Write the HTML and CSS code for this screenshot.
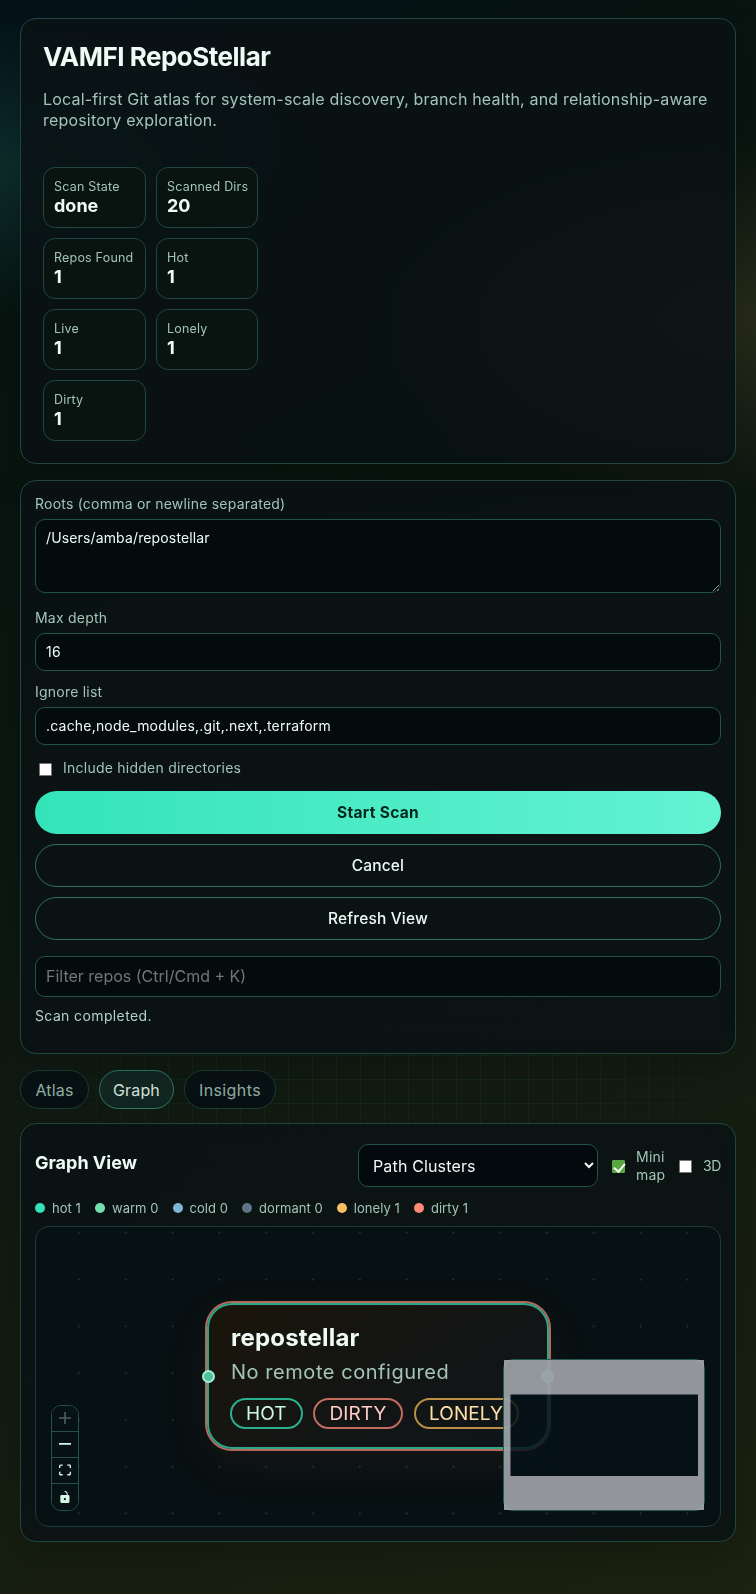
FILE: index.html
```html
<!DOCTYPE html>
<html lang="en">
<head>
  <meta charset="UTF-8">
  <meta name="viewport" content="width=device-width, initial-scale=1.0">
  <title>VAMFI RepoStellar</title>
  <link rel="stylesheet" href="styles.css">
</head>
<body>

  <main class="app">
    <header class="panel hero">
      <h1>VAMFI RepoStellar</h1>
      <p class="tagline">Local-first Git atlas for system-scale discovery, branch health, and relationship-aware<br>repository exploration.</p>
      <div class="stats">
        <div class="stat"><span>Scan State</span><strong>done</strong></div>
        <div class="stat"><span>Scanned Dirs</span><strong>20</strong></div>
        <div class="stat"><span>Repos Found</span><strong>1</strong></div>
        <div class="stat"><span>Hot</span><strong>1</strong></div>
        <div class="stat"><span>Live</span><strong>1</strong></div>
        <div class="stat"><span>Lonely</span><strong>1</strong></div>
        <div class="stat"><span>Dirty</span><strong>1</strong></div>
      </div>
    </header>

    <section class="panel controls">
      <label class="field roots">Roots (comma or newline separated)
        <textarea>/Users/amba/repostellar</textarea>
      </label>
      <label class="field">Max depth
        <input type="text" value="16">
      </label>
      <label class="field">Ignore list
        <input type="text" value=".cache,node_modules,.git,.next,.terraform">
      </label>
      <label class="check"><input type="checkbox"> Include hidden directories</label>
      <div class="actions">
        <button class="btn primary">Start Scan</button>
        <button class="btn">Cancel</button>
        <button class="btn">Refresh View</button>
      </div>
      <input class="search" type="text" placeholder="Filter repos (Ctrl/Cmd + K)">
      <p class="status">Scan completed.</p>
    </section>

    <nav class="tabs">
      <button class="tab">Atlas</button>
      <button class="tab active">Graph</button>
      <button class="tab insights">Insights</button>
    </nav>

    <section class="panel graph">
      <div class="graph-head">
        <h2>Graph View</h2>
        <div class="graph-tools">
          <select><option>Path Clusters</option></select>
          <label class="check mini"><input type="checkbox" checked> <span>Mini map</span></label>
          <label class="check"><input type="checkbox"> <span class="three-d">3D</span></label>
        </div>
      </div>

      <div class="legend">
        <span><i class="dot hot"></i>hot 1</span>
        <span><i class="dot warm"></i>warm 0</span>
        <span><i class="dot cold"></i>cold 0</span>
        <span><i class="dot dormant"></i>dormant 0</span>
        <span><i class="dot lonely"></i>lonely 1</span>
        <span><i class="dot dirty"></i>dirty 1</span>
      </div>

      <div class="canvas">
        <div class="node">
          <span class="handle left"></span>
          <span class="handle right"></span>
          <div class="node-title">repostellar</div>
          <div class="node-sub">No remote configured</div>
          <div class="pills">
            <span class="pill p-hot">HOT</span>
            <span class="pill p-dirty">DIRTY</span>
            <span class="pill p-lonely">LONELY</span>
          </div>
        </div>

        <div class="zoom-controls">
          <button disabled><svg viewBox="0 0 32 32"><path d="M32 18.133H18.133V32h-4.266V18.133H0v-4.266h13.867V0h4.266v13.867H32z"/></svg></button>
          <button><svg viewBox="0 0 32 5" class="minus"><path d="M0 0h32v4.2H0z"/></svg></button>
          <button><svg viewBox="0 0 32 30"><path d="M3.692 4.63c0-.53.4-.938.939-.938h5.215V0H4.708C2.13 0 0 2.054 0 4.63v5.216h3.692V4.631zM27.354 0h-5.2v3.692h5.17c.53 0 .984.4.984.939v5.215H32V4.631A4.624 4.624 0 0027.354 0zm.954 24.83c0 .532-.4.94-.939.94h-5.215v3.768h5.215c2.577 0 4.631-2.13 4.631-4.707v-5.139h-3.692v5.139zm-23.677.94a.919.919 0 01-.939-.94v-5.138H0v5.139c0 2.577 2.13 4.707 4.708 4.707h5.138V25.77H4.631z"/></svg></button>
          <button><svg viewBox="0 0 25 32"><path d="M21.333 10.667H19.81V7.619C19.81 3.429 16.38 0 12.19 0c-4.114 1.828-1.37 2.133.305 2.438 1.676.305 4.42 2.59 4.42 5.181v3.048H3.047A3.056 3.056 0 000 13.714v15.238A3.056 3.056 0 003.048 32h18.285a3.056 3.056 0 003.048-3.048V13.714a3.056 3.056 0 00-3.048-3.047zM12.19 24.533a3.056 3.056 0 01-3.047-3.047 3.056 3.056 0 013.047-3.048 3.056 3.056 0 013.048 3.048 3.056 3.056 0 01-3.048 3.047z"/></svg></button>
        </div>

        <div class="minimap">
          <svg width="200" height="150" viewBox="0 0 200 150"><path fill-rule="evenodd" d="M0 0h200v150H0zM6.500 34.500h187.500v81.500H6.500z"/></svg>
        </div>
      </div>
    </section>
  </main>

</body>
</html>
```
FILE: styles.css
```css
* {
  box-sizing: border-box;
}

body {
  margin: 0;
  min-height: 1594px;
  position: relative;
  font-family: Inter, "Liberation Sans", sans-serif;
  color: #eefbf5;
  background:
    radial-gradient(ellipse 350px 150px at -10px 165px, rgba(24, 84, 78, 0.4), transparent),
    radial-gradient(ellipse 370px 180px at 740px 318px, rgba(96, 84, 44, 0.34), transparent),
    linear-gradient(155deg, #05121a 0%, #07140f 18%, #0f1912 55%, #1c2210 100%);
}

/* faint grid, only visible around the tabs */
body::before {
  content: "";
  position: absolute;
  inset: 0;
  background-image:
    linear-gradient(rgba(60, 160, 120, 0.09) 1px, transparent 1px),
    linear-gradient(90deg, rgba(60, 160, 120, 0.09) 1px, transparent 1px);
  background-size: 24px 24px;
  background-position: 0 -1px;
  -webkit-mask-image: radial-gradient(ellipse 380px 340px at 50% 1085px, #000 45%, transparent 100%);
  mask-image: radial-gradient(ellipse 380px 340px at 50% 1085px, #000 45%, transparent 100%);
}

h1, h2, p {
  margin: 0;
}

button, input, textarea, select {
  font-family: inherit;
  color: inherit;
}

.app {
  position: relative;
  padding: 18px 20px 0;
}

.panel {
  border: 1px solid #1f4740;
  border-radius: 16px;
  background: rgba(10, 17, 20, 0.82);
  box-shadow: 0 14px 40px rgba(0, 0, 0, 0.2);
  backdrop-filter: blur(8px);
}

/* hero */

.hero {
  height: 446px;
  padding: 21px 22px;
}

h1 {
  font-size: 26px;
  line-height: 33px;
  letter-spacing: -0.5px;
  font-weight: 700;
}

.tagline {
  margin-top: 16px;
  font-size: 16px;
  line-height: 21px;
  letter-spacing: 0.18px;
  white-space: nowrap;
  color: #a3c4b8;
}

.stats {
  margin-top: 36px;
  display: grid;
  grid-template-columns: 103px 102px;
  gap: 10px;
}

.stat {
  height: 61px;
  padding: 10px;
  border: 1px solid #1f4740;
  border-radius: 12px;
  background: rgba(9, 20, 16, 0.85);
}

.stat span {
  display: block;
  font-size: 12.5px;
  line-height: 17px;
  letter-spacing: 0.2px;
  white-space: nowrap;
  color: #a3c4b8;
}

.stat strong {
  display: block;
  font-size: 18px;
  line-height: 22px;
}

/* scan form */

.controls {
  margin-top: 16px;
  height: 574px;
  padding: 14px;
}

.field {
  display: block;
  margin-bottom: 12px;
  font-size: 14px;
  line-height: 18px;
  letter-spacing: 0.22px;
  color: #a3c4b8;
}

.field.roots {
  margin-bottom: 16px;
}

.field textarea,
.field input,
.search {
  display: block;
  width: 100%;
  margin: 6px 0 0;
  padding: 9px 10px;
  border: 1px solid #235248;
  border-radius: 10px;
  background: #040b0d;
  color: #eefbf5;
  font-size: 14px;
  line-height: 18px;
  letter-spacing: 0.2px;
}

.field textarea {
  height: 74px;
  letter-spacing: 0.14px;
}

.field input {
  height: 38px;
  padding: 8px 10px 10px;
}

.check {
  display: flex;
  align-items: center;
  gap: 11px;
  font-size: 14px;
  line-height: 18px;
  letter-spacing: 0.24px;
  color: #a3c4b8;
}

.check input {
  appearance: none;
  flex: none;
  width: 13px;
  height: 13px;
  margin: 2px 0 0 4px;
  border: 1px solid #767676;
  border-radius: 1px;
  background: #fff;
}

.check input:checked {
  border-color: #58a741;
  background: #58a741;
}

.check input:checked::after {
  content: "";
  display: block;
  width: 5px;
  height: 9px;
  margin: 0 0 0 3px;
  border: solid #fff;
  border-width: 0 2px 2px 0;
  transform: rotate(40deg);
}

.controls .check {
  margin-top: 14px;
  height: 18px;
}

.actions {
  margin-top: 14px;
  display: flex;
  flex-direction: column;
  gap: 10px;
}

.btn {
  height: 43px;
  padding: 0;
  border: 1px solid #2c7260;
  border-radius: 22px;
  background: transparent;
  font-size: 15.5px;
  font-weight: 500;
  letter-spacing: 0.15px;
}

.btn.primary {
  border: none;
  background: linear-gradient(90deg, #34e4b9, #63f3d2);
  color: #03251d;
  font-weight: 700;
  letter-spacing: 0.3px;
}

.search {
  height: 41px;
  margin-top: 16px;
  padding: 8px 10px 10px;
  font-size: 16px;
  letter-spacing: 0;
}

.search::placeholder {
  color: #757575;
}

.status {
  margin-top: 10px;
  font-size: 14px;
  line-height: 18px;
  letter-spacing: 0.38px;
  color: #b4d2c7;
}

/* tabs */

.tabs {
  margin-top: 16px;
  display: flex;
  gap: 10px;
}

.tab {
  width: 69px;
  height: 39px;
  padding: 0;
  border: 1px solid #1b3d36;
  border-radius: 20px;
  background: #081113;
  color: #93b1a6;
  font-size: 16px;
  letter-spacing: 0.15px;
}

.tab.active {
  width: 75px;
  border-color: #2f7b68;
  background: #122622;
  color: #d8e6df;
}

.tab.insights {
  width: 92px;
  letter-spacing: 0.4px;
}

/* graph */

.graph {
  margin-top: 14px;
  height: 419px;
  padding: 20px 14px 14px;
}

.graph-head {
  display: flex;
  justify-content: space-between;
  align-items: center;
}

h2 {
  margin-bottom: 7px;
  font-size: 18px;
  line-height: 23px;
}

.graph-tools {
  display: flex;
  align-items: center;
  gap: 10px;
}

.graph-tools select {
  width: 240px;
  height: 43px;
  padding: 0 10px;
  border: 1px solid #235248;
  border-radius: 10px;
  background: #04090d;
  color: #eefbf5;
  font-size: 16px;
  letter-spacing: 0.15px;
}

.check.mini span {
  width: 29px;
}

.check .three-d {
  width: 18px;
  letter-spacing: -0.4px;
}

.legend {
  margin-top: 12px;
  display: flex;
  gap: 14px;
  font-size: 13px;
  line-height: 18px;
  letter-spacing: 0.05px;
  color: #a3c4b8;
}

.legend span {
  display: flex;
  align-items: center;
  gap: 7px;
}

.dot {
  width: 10px;
  height: 10px;
  border-radius: 50%;
}

.dot.hot { background: #34e4b9; }
.dot.warm { background: #76dfae; }
.dot.cold { background: #7db6d8; }
.dot.dormant { background: #5f7484; }
.dot.lonely { background: #f7bf62; }
.dot.dirty { background: #ff8a78; }

.canvas {
  position: relative;
  height: 301px;
  margin-top: 9px;
  overflow: hidden;
  border: 1px solid #1b3d38;
  border-radius: 14px;
  background-color: #071012;
  background-image: radial-gradient(circle, #1c2d2d 0.9px, transparent 1.4px);
  background-size: 46.8px 46.8px;
  background-position: 19.6px -17.7px;
}

.node {
  position: absolute;
  left: 171px;
  top: 76px;
  width: 342px;
  height: 146px;
  padding: 18px 21px;
  border: 2px solid #2da689;
  border-radius: 25px;
  background: linear-gradient(145deg, #1a1509, #141513 45%, #0e1519);
  box-shadow: 0 0 0 2px #b4695d, 0 14px 50px rgba(255, 120, 90, 0.07);
}

.handle {
  position: absolute;
  top: 65px;
  width: 13px;
  height: 13px;
  border: 2px solid #a5eed6;
  border-radius: 50%;
  background: #50bf9d;
}

.handle.left {
  left: -7px;
}

.handle.right {
  right: -7px;
}

.node-title {
  padding-left: 1px;
  font-size: 24px;
  line-height: 30px;
  letter-spacing: 0.2px;
  font-weight: 700;
  color: #eefbf5;
}

.node-sub {
  margin-top: 6px;
  padding-left: 1px;
  font-size: 20px;
  line-height: 26px;
  letter-spacing: 0.55px;
  white-space: nowrap;
  color: #a3c4b8;
}

.pills {
  margin-top: 13px;
  display: flex;
  gap: 10.5px;
}

.pill {
  flex: none;
  width: 72.5px;
  height: 31px;
  border: 2px solid #2bb08f;
  border-radius: 16px;
  font-size: 19px;
  line-height: 27px;
  letter-spacing: 0.1px;
  text-align: center;
  color: #cdf7e8;
}

.p-dirty {
  width: 90px;
  border-color: #c06c5f;
  color: #ffcdc6;
}

.p-lonely {
  width: 105px;
  border-color: #b98f47;
  color: #ffe0a8;
}

.zoom-controls {
  position: absolute;
  left: 15px;
  bottom: 15px;
  width: 28px;
  height: 106px;
  overflow: hidden;
  border: 1px solid #235248;
  border-radius: 10px;
  background: #08120f;
}

.zoom-controls button {
  display: flex;
  justify-content: center;
  align-items: center;
  width: 26px;
  height: 26px;
  padding: 0 0 1px;
  border: none;
  border-bottom: 1px solid #235248;
  background: #081114;
}

.zoom-controls button:last-child {
  border-bottom: none;
}

.zoom-controls svg {
  width: 12px;
  height: 12px;
  fill: #d3f8ea;
}

.zoom-controls .minus {
  height: 2px;
}

.zoom-controls button:disabled svg {
  fill: #4c5f5b;
}

.minimap {
  position: absolute;
  right: 15px;
  bottom: 15px;
  width: 202px;
  height: 152px;
  border: 1px solid #245a52;
  border-radius: 10px;
  background: rgba(5, 18, 25, 0.84);
}

.minimap svg {
  display: block;
  overflow: visible;
}

.minimap path {
  fill: rgba(240, 240, 244, 0.6);
}
```
